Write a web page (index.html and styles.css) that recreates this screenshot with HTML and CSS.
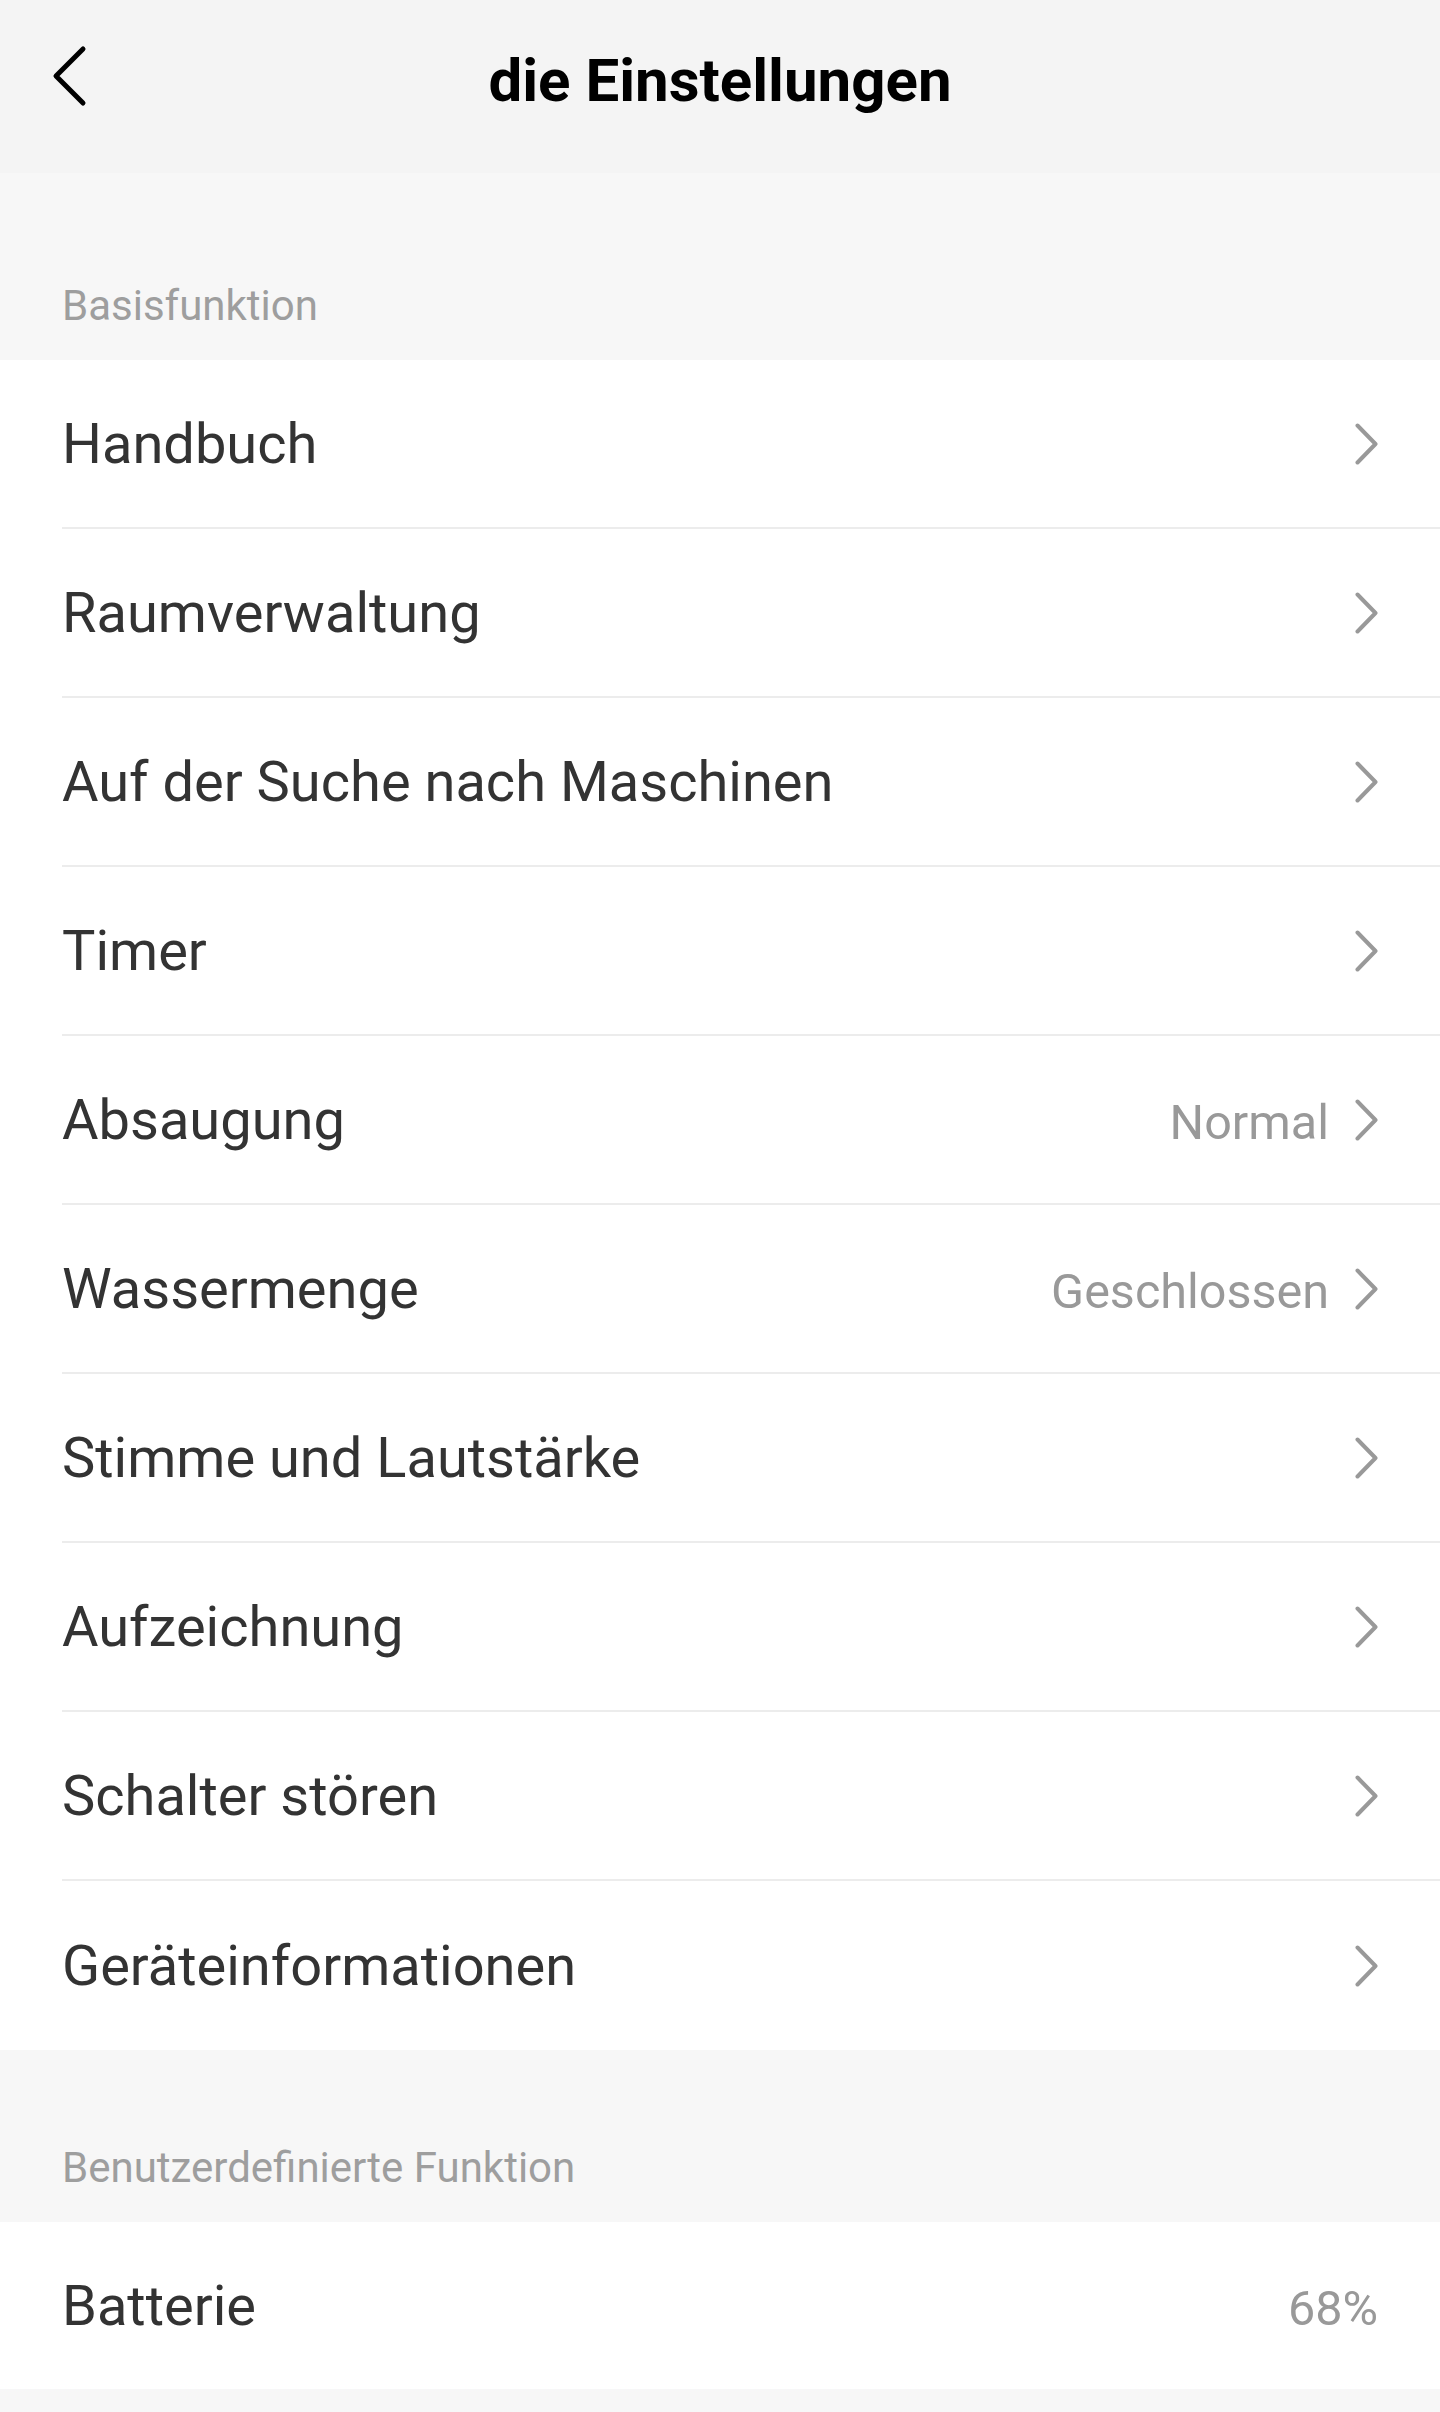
FILE: index.html
```html
<!DOCTYPE html>
<html lang="de">
<head>
<meta charset="utf-8">
<title>die Einstellungen</title>
<link rel="stylesheet" href="styles.css">
</head>
<body>
<header class="topbar">
  <div class="topbar-left">
    <button class="back" aria-label="Zurück">
      <svg class="back-icon" width="36" height="62" viewBox="0 0 36 62"><path d="M31 4 L4 31 L31 58" fill="none" stroke="#000" stroke-width="5" stroke-linecap="round" stroke-linejoin="round"/></svg>
    </button>
  </div>
  <h1 class="title">die Einstellungen</h1>
  <div class="topbar-right"></div>
</header>

<main class="page">
  <div class="group-label group-label--first">Basisfunktion</div>
  <ul class="list">
    <li class="row"><div class="row-inner"><span class="row-title">Handbuch</span><svg class="chev" width="23" height="42" viewBox="0 0 23 42"><path d="M2.5 2.5 L20.5 21 L2.5 39.5" fill="none" stroke="#999" stroke-width="4" stroke-linecap="round" stroke-linejoin="round"/></svg></div></li>
    <li class="row"><div class="row-inner"><span class="row-title">Raumverwaltung</span><svg class="chev" width="23" height="42" viewBox="0 0 23 42"><path d="M2.5 2.5 L20.5 21 L2.5 39.5" fill="none" stroke="#999" stroke-width="4" stroke-linecap="round" stroke-linejoin="round"/></svg></div></li>
    <li class="row"><div class="row-inner"><span class="row-title">Auf der Suche nach Maschinen</span><svg class="chev" width="23" height="42" viewBox="0 0 23 42"><path d="M2.5 2.5 L20.5 21 L2.5 39.5" fill="none" stroke="#999" stroke-width="4" stroke-linecap="round" stroke-linejoin="round"/></svg></div></li>
    <li class="row"><div class="row-inner"><span class="row-title">Timer</span><svg class="chev" width="23" height="42" viewBox="0 0 23 42"><path d="M2.5 2.5 L20.5 21 L2.5 39.5" fill="none" stroke="#999" stroke-width="4" stroke-linecap="round" stroke-linejoin="round"/></svg></div></li>
    <li class="row"><div class="row-inner"><span class="row-title">Absaugung</span><span class="row-value">Normal</span><svg class="chev" width="23" height="42" viewBox="0 0 23 42"><path d="M2.5 2.5 L20.5 21 L2.5 39.5" fill="none" stroke="#999" stroke-width="4" stroke-linecap="round" stroke-linejoin="round"/></svg></div></li>
    <li class="row"><div class="row-inner"><span class="row-title">Wassermenge</span><span class="row-value">Geschlossen</span><svg class="chev" width="23" height="42" viewBox="0 0 23 42"><path d="M2.5 2.5 L20.5 21 L2.5 39.5" fill="none" stroke="#999" stroke-width="4" stroke-linecap="round" stroke-linejoin="round"/></svg></div></li>
    <li class="row"><div class="row-inner"><span class="row-title">Stimme und Lautstärke</span><svg class="chev" width="23" height="42" viewBox="0 0 23 42"><path d="M2.5 2.5 L20.5 21 L2.5 39.5" fill="none" stroke="#999" stroke-width="4" stroke-linecap="round" stroke-linejoin="round"/></svg></div></li>
    <li class="row"><div class="row-inner"><span class="row-title">Aufzeichnung</span><svg class="chev" width="23" height="42" viewBox="0 0 23 42"><path d="M2.5 2.5 L20.5 21 L2.5 39.5" fill="none" stroke="#999" stroke-width="4" stroke-linecap="round" stroke-linejoin="round"/></svg></div></li>
    <li class="row"><div class="row-inner"><span class="row-title">Schalter stören</span><svg class="chev" width="23" height="42" viewBox="0 0 23 42"><path d="M2.5 2.5 L20.5 21 L2.5 39.5" fill="none" stroke="#999" stroke-width="4" stroke-linecap="round" stroke-linejoin="round"/></svg></div></li>
    <li class="row"><div class="row-inner"><span class="row-title">Geräteinformationen</span><svg class="chev" width="23" height="42" viewBox="0 0 23 42"><path d="M2.5 2.5 L20.5 21 L2.5 39.5" fill="none" stroke="#999" stroke-width="4" stroke-linecap="round" stroke-linejoin="round"/></svg></div></li>
  </ul>

  <div class="group-label group-label--second">Benutzerdefinierte Funktion</div>
  <ul class="list">
    <li class="row row--short"><div class="row-inner"><span class="row-title">Batterie</span><span class="row-value row-value--end">68%</span></div></li>
  </ul>
</main>
</body>
</html>
```

FILE: styles.css
```css
* { box-sizing: border-box; }

html, body {
  margin: 0;
  padding: 0;
}

body {
  background: #f7f7f7;
  font-family: Roboto, "Noto Sans", "Liberation Sans", sans-serif;
  color: #333333;
  width: 1440px;
  min-height: 2412px;
}

.topbar {
  height: 173px;
  background: #f4f4f4;
  display: grid;
  grid-template-columns: 1fr auto 1fr;
  align-items: center;
  padding-bottom: 12px;
}

.topbar-left {
  display: flex;
  align-items: center;
  padding-left: 52px;
}

.back {
  border: 0;
  background: none;
  padding: 0;
  margin: 0 0 10px 0;
  display: flex;
  cursor: pointer;
}

.back-icon { display: block; }

.title {
  margin: 0;
  font-size: 60px;
  line-height: 1;
  font-weight: 700;
  color: #000;
  letter-spacing: 0;
}

.page { display: block; }

.group-label {
  font-size: 42px;
  line-height: 1;
  color: #9e9e9e;
  padding: 0 62px 33px;
}

.group-label--first { padding-top: 112px; }
.group-label--second { padding-top: 97px; }

.list {
  list-style: none;
  margin: 0;
  padding: 0;
  background: #ffffff;
}

.row {
  height: 169px;
  padding-left: 62px;
  display: flex;
}

.row--short { height: 167px; }

.row-inner {
  flex: 1;
  display: flex;
  align-items: center;
  padding-right: 62px;
  border-bottom: 2px solid #ececec;
}

.row:last-child .row-inner { border-bottom: 0; }

.row-title {
  flex: 1;
  font-size: 56px;
  line-height: 1;
  color: #333333;
  white-space: nowrap;
}

.row-value {
  font-size: 48.5px;
  line-height: 1;
  color: #999999;
  margin-right: 26px;
  padding-top: 7px;
}

.row-value--end { margin-right: 0; }

.chev {
  display: block;
  flex: none;
}
```
